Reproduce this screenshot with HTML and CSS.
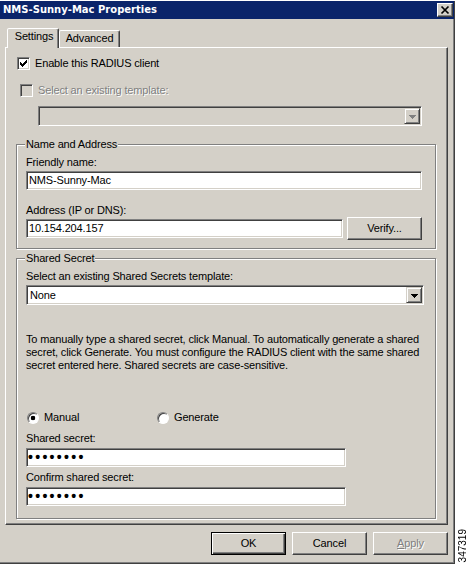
FILE: index.html
```html
<!DOCTYPE html>
<html>
<head>
<meta charset="utf-8">
<link rel="stylesheet" href="styles.css">
</head>
<body>
<div class="page">
  <div class="window">
    <div class="titlebar">
      <span class="title">NMS-Sunny-Mac Properties</span>
      <span class="close"><svg width="14" height="12" viewBox="0 0 14 12"><path d="M3.5 2.5l7 7M10.5 2.5l-7 7" stroke="#000" stroke-width="1.7" fill="none"/></svg></span>
    </div>
    <div class="client">
      <div class="tabs">
        <div class="tab tab-settings active">Settings</div>
        <div class="tab tab-advanced">Advanced</div>
      </div>
      <div class="panel">
        <div class="check-row enable">
          <span class="chk"><svg width="11" height="11" viewBox="0 0 11 11" shape-rendering="crispEdges"><path d="M8 2h1v1h-1z M7 3h2v1h-2z M2 4h1v1h-1z M6 4h3v1h-3z M2 5h2v1h-2z M5 5h3v1h-3z M2 6h5v1h-5z M3 7h3v1h-3z M4 8h1v1h-1z" fill="#000"/></svg></span>
          <span>Enable this RADIUS client</span>
        </div>
        <div class="check-row template">
          <span class="chk chk-disabled"></span>
          <span class="dis-text">Select an existing template:</span>
        </div>
        <div class="combo combo-template combo-disabled">
          <span class="combo-text"></span>
          <span class="drop"><svg width="14" height="14" viewBox="0 0 14 14" shape-rendering="crispEdges"><path d="M4 6h7v1h-7z M5 7h5v1h-5z M6 8h3v1h-3z M7 9h1v1h-1z" fill="#808080"/></svg></span>
        </div>

        <fieldset class="group group-name">
          <legend>Name and Address</legend>
          <div class="lbl">Friendly name:</div>
          <div class="field field-friendly">NMS-Sunny-Mac</div>
          <div class="lbl lbl-address">Address (IP or DNS):</div>
          <div class="addr-row">
            <div class="field field-address">10.154.204.157</div>
            <div class="btn btn-verify">Verify...</div>
          </div>
        </fieldset>

        <fieldset class="group group-secret">
          <legend>Shared Secret</legend>
          <div class="lbl">Select an existing Shared Secrets template:</div>
          <div class="combo combo-secret">
            <span class="combo-text">None</span>
            <span class="drop"><svg width="14" height="14" viewBox="0 0 14 14" shape-rendering="crispEdges"><path d="M4 6h7v1h-7z M5 7h5v1h-5z M6 8h3v1h-3z M7 9h1v1h-1z" fill="#000"/></svg></span>
          </div>
          <p class="help">To manually type a shared secret, click Manual. To automatically generate a shared<br>secret, click Generate. You must configure the RADIUS client with the same shared<br>secret entered here. Shared secrets are case-sensitive.</p>
          <div class="radio-row">
            <div class="radio-opt opt-manual"><span class="radio radio-on"></span><span>Manual</span></div>
            <div class="radio-opt opt-generate"><span class="radio"></span><span>Generate</span></div>
          </div>
          <div class="lbl lbl-secret">Shared secret:</div>
          <div class="field field-secret dots">&bull;&bull;&bull;&bull;&bull;&bull;&bull;&bull;</div>
          <div class="lbl lbl-confirm">Confirm shared secret:</div>
          <div class="field field-secret dots">&bull;&bull;&bull;&bull;&bull;&bull;&bull;&bull;</div>
        </fieldset>
      </div>
      <div class="buttons">
        <div class="btn btn-default">OK</div>
        <div class="btn">Cancel</div>
        <div class="btn btn-disabled"><u>A</u>pply</div>
      </div>
    </div>
  </div>
  <div class="fig">347319</div>
</div>
</body>
</html>
```

FILE: styles.css
```css
* { box-sizing: border-box; }

body {
  margin: 0;
  background: #fff;
  font-family: "Liberation Sans", Arial, sans-serif;
  font-size: 11px;
  line-height: 13px;
  letter-spacing: -0.15px;
  color: #000;
}

.page {
  display: flex;
  align-items: flex-end;
  width: 468px;
  height: 564px;
}

.window {
  width: 455px;
  height: 563px;
  background: #d4d0c8;
  border-right: 1px solid #404040;
  border-bottom: 1px solid #404040;
  box-shadow: inset -1px -1px 0 #808080;
  display: flex;
  flex-direction: column;
}

.titlebar {
  height: 18px;
  background: #0a246a;
  display: flex;
  align-items: center;
  justify-content: space-between;
  padding: 0 1px 0 3px;
}

.title {
  font-family: "DejaVu Sans", Verdana, sans-serif;
  font-weight: bold;
  font-size: 10px;
  letter-spacing: 0;
  color: #fff;
  line-height: 12px;
}

.close {
  width: 16px;
  height: 14px;
  background: #d4d0c8;
  border: 1px solid;
  border-color: #fff #404040 #404040 #fff;
  box-shadow: inset -1px -1px 0 #808080;
  display: flex;
  align-items: center;
  justify-content: center;
}

.client {
  flex: 1;
  padding: 9px 6px 0 5px;
  display: flex;
  flex-direction: column;
}

.tabs {
  display: flex;
  align-items: flex-end;
  height: 19px;
  padding-left: 2px;
}

.tab {
  height: 17px;
  border: 1px solid;
  border-bottom: none;
  border-color: #fff #404040 transparent #fff;
  box-shadow: inset -1px 0 0 #808080;
  border-radius: 2px 2px 0 0;
  text-align: center;
  line-height: 14px;
  background: #d4d0c8;
}

.tab-settings { width: 52px; padding-left: 2px; }
.tab-advanced { width: 61px; padding-left: 0; }

.tab.active {
  height: 20px;
  margin-bottom: -1px;
  position: relative;
  z-index: 1;
  line-height: 13px;
  padding-top: 1px;
}

.panel {
  height: 478px;
  border: 1px solid;
  border-color: #fff #404040 #404040 #fff;
  box-shadow: inset -1px -1px 0 #808080;
  padding: 0 0 5px 10px;
}

.check-row {
  display: flex;
  align-items: center;
  gap: 5px;
  height: 13px;
}

.enable { margin-top: 9px; margin-left: 1px; }
.template { margin-top: 14px; margin-left: 4px; }

.chk {
  width: 13px;
  height: 13px;
  flex: none;
  border: 1px solid;
  border-color: #808080 #fff #fff #808080;
  box-shadow: inset 1px 1px 0 #404040, inset -1px -1px 0 #d4d0c8;
  background: #fff;
  display: flex;
}

.chk-disabled { background: #d4d0c8; }

.dis-text, .btn-disabled {
  color: #808080;
  text-shadow: 1px 1px 0 #fff;
}

.combo {
  height: 20px;
  border: 1px solid;
  border-color: #808080 #fff #fff #808080;
  box-shadow: inset 1px 1px 0 #404040, inset -1px -1px 0 #d4d0c8;
  background: #fff;
  display: flex;
  padding: 1px;
}

.combo-disabled { background: #d4d0c8; }

.combo-template {
  margin-top: 9px;
  margin-left: 22px;
  width: 384px;
}

.combo-secret {
  margin-top: 2px;
  width: 398px;
}

.combo-text {
  flex: 1;
  padding-left: 2px;
  line-height: 16px;
}

.drop {
  width: 16px;
  height: 16px;
  flex: none;
  background: #d4d0c8;
  border: 1px solid;
  border-color: #d4d0c8 #404040 #404040 #d4d0c8;
  box-shadow: inset 1px 1px 0 #fff, inset -1px -1px 0 #808080;
}

.drop svg { display: block; }

.group {
  margin: 0;
  width: 420px;
  min-width: 0;
  border: 1px solid #808080;
  box-shadow: inset 1px 1px 0 #fff, 1px 1px 0 #fff;
  padding: 5px 0 8px 9px;
}

.group legend {
  padding: 0 1px;
  margin-left: -1px;
  line-height: 13px;
  background: #d4d0c8;
}

.group-name { margin-top: 12px; }
.group-secret { margin-top: 3px; padding-bottom: 12px; }

.lbl { height: 13px; white-space: nowrap; }

.field {
  height: 19px;
  border: 1px solid;
  border-color: #808080 #fff #fff #808080;
  box-shadow: inset 1px 1px 0 #404040, inset -1px -1px 0 #d4d0c8;
  background: #fff;
  padding: 1px 2px;
  line-height: 15px;
  white-space: nowrap;
}

.field-friendly { margin-top: 2px; width: 396px; }
.lbl-address { margin-top: 14px; }

.addr-row {
  display: flex;
  align-items: center;
  gap: 4px;
  height: 23px;
}

.field-address { width: 317px; }

.btn {
  width: 75px;
  height: 23px;
  border: 1px solid;
  border-color: #fff #404040 #404040 #fff;
  box-shadow: inset -1px -1px 0 #808080;
  display: flex;
  align-items: center;
  justify-content: center;
  background: #d4d0c8;
}

.btn-default {
  border-color: #000;
  box-shadow: inset 1px 1px 0 #fff, inset -1px -1px 0 #404040, inset -2px -2px 0 #808080;
}

.btn-disabled u { text-decoration: underline; }

.help {
  margin: 28px 0 0 0;
  white-space: nowrap;
  line-height: 13px;
}

.radio-row {
  margin-top: 39px;
  display: flex;
  height: 13px;
  align-items: center;
}

.radio-opt {
  display: flex;
  align-items: center;
  gap: 5px;
}

.opt-manual { width: 131px; padding-left: 1px; }

.radio {
  width: 12px;
  height: 12px;
  flex: none;
  border-radius: 50%;
  border: 1px solid;
  border-color: #808080 #fff #fff #808080;
  box-shadow: inset 1px 1px 0 #404040;
  background: #fff;
}

.radio-on {
  background: radial-gradient(circle at 50% 50%, #000 0 2px, #fff 2.6px);
}

.lbl-secret { margin-top: 8px; }
.lbl-confirm { margin-top: 4px; }

.field-secret { margin-top: 3px; width: 320px; }

.dots {
  font-weight: bold;
  font-size: 14px;
  letter-spacing: 2.3px;
  line-height: 15px;
  padding-left: 1px;
}

.buttons {
  display: flex;
  justify-content: flex-end;
  gap: 6px;
  margin-top: 7px;
}

.fig {
  writing-mode: vertical-rl;
  transform: rotate(180deg);
  font-size: 10px;
  line-height: 9px;
  letter-spacing: 0;
  margin-left: 3px;
  margin-bottom: 2px;
}
```
